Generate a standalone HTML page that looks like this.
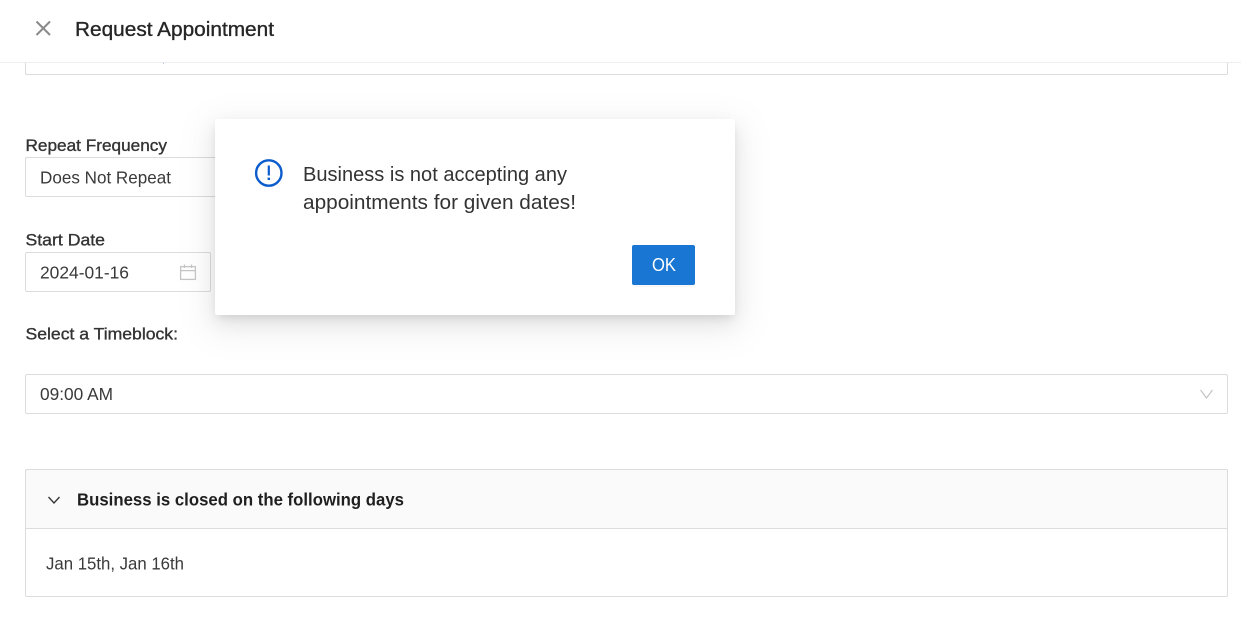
<!DOCTYPE html>
<html lang="en">
<head>
<meta charset="utf-8">
<title>Request Appointment</title>
<style>
html,body{margin:0;padding:0;background:#fff;}
body{position:relative;width:1241px;height:628px;overflow:hidden;font-family:"Liberation Sans",sans-serif;}
.box{position:absolute;box-sizing:border-box;border:1px solid #dcdcdc;border-radius:2px;background:#fff;}
.header{position:absolute;left:0;top:0;width:1241px;height:63px;background:#fff;border-bottom:1px solid #eeeeee;box-sizing:border-box;}
.panelhead{position:absolute;left:25px;top:469px;width:1203px;height:60px;box-sizing:border-box;background:#fafafa;border:1px solid #dcdcdc;border-radius:2px 2px 0 0;}
.dialog{position:absolute;left:215px;top:119px;width:520px;height:196px;background:#fff;border-radius:2px;box-shadow:0 4px 8px -2px rgba(0,0,0,.10),0 8px 20px rgba(0,0,0,.08),0 10px 36px 10px rgba(0,0,0,.05);}
.btn{position:absolute;left:632px;top:245px;width:63px;height:40px;background:#1976d2;border-radius:2px;box-shadow:0 2px 0 rgba(0,0,0,.03);}
svg.layer{position:absolute;left:0;top:0;}
text{font-family:"Liberation Sans",sans-serif;}
</style>
</head>
<body>
<div class="box" style="left:25px;top:30px;width:1203px;height:45px;"></div>
<div class="header"></div>
<div class="box" style="left:25px;top:157px;width:400px;height:40px;"></div>
<div class="box" style="left:25px;top:252px;width:186px;height:40px;"></div>
<div class="box" style="left:25px;top:374px;width:1203px;height:40px;"></div>
<div class="box" style="left:25px;top:469px;width:1203px;height:128px;"></div>
<div class="panelhead"></div>
<div class="dialog"></div>
<div class="btn"></div>
<svg class="layer" width="1241" height="628" viewBox="0 0 1241 628" xmlns="http://www.w3.org/2000/svg">
  <rect x="163" y="63" width="1" height="1" fill="#a9c6e6"/>
  <path d="M36.5 21.5L50 35M50 21.5L36.5 35" fill="none" stroke="#8a8a8a" stroke-width="2"/>
  <text x="75" y="36" font-size="20" fill="#262626" stroke="#262626" stroke-width=".35" textLength="199" lengthAdjust="spacingAndGlyphs">Request Appointment</text>

  <text x="25.5" y="151" font-size="17" fill="#333" stroke="#333" stroke-width=".35" textLength="141.5" lengthAdjust="spacingAndGlyphs">Repeat Frequency</text>
  <text x="40" y="183.5" font-size="17.5" fill="#3a3a3a" textLength="131" lengthAdjust="spacingAndGlyphs">Does Not Repeat</text>

  <text x="25.5" y="245.5" font-size="17" fill="#333" stroke="#333" stroke-width=".35" textLength="79.5" lengthAdjust="spacingAndGlyphs">Start Date</text>
  <text x="40" y="278.5" font-size="17.5" fill="#3a3a3a" textLength="89" lengthAdjust="spacingAndGlyphs">2024-01-16</text>
  <g fill="none" stroke="#c4c4c4" stroke-width="1.3">
    <rect x="180.6" y="266.6" width="14.8" height="12.8"/>
    <path d="M180.6 270.6H195.4M184.5 264.5V268M191.5 264.5V268"/>
  </g>

  <text x="25.5" y="339.5" font-size="17" fill="#333" stroke="#333" stroke-width=".35" textLength="152.5" lengthAdjust="spacingAndGlyphs">Select a Timeblock:</text>
  <text x="40" y="400" font-size="17.5" fill="#3a3a3a" textLength="73" lengthAdjust="spacingAndGlyphs">09:00 AM</text>
  <path d="M1200.5 390L1206.5 398L1212.5 390" fill="none" stroke="#c4c4c4" stroke-width="1.2"/>

  <path d="M48.5 497L54 503L59.5 497" fill="none" stroke="#333" stroke-width="1.3"/>
  <text x="77" y="505.5" font-size="17.5" font-weight="700" fill="#1f1f1f" textLength="327" lengthAdjust="spacingAndGlyphs">Business is closed on the following days</text>
  <text x="46" y="569.5" font-size="17.5" fill="#3a3a3a" textLength="138" lengthAdjust="spacingAndGlyphs">Jan 15th, Jan 16th</text>

  <circle cx="268.8" cy="173" r="12.7" fill="none" stroke="#0b5ccc" stroke-width="2.4"/>
  <path d="M268.8 165.5V175.5" stroke="#0b5ccc" stroke-width="2.2" fill="none"/>
  <rect x="267.6" y="177.6" width="2.4" height="2.4" fill="#0b5ccc"/>
  <text x="303" y="181" font-size="20" fill="#333" textLength="264" lengthAdjust="spacingAndGlyphs">Business is not accepting any</text>
  <text x="303" y="209" font-size="20" fill="#333" textLength="273" lengthAdjust="spacingAndGlyphs">appointments for given dates!</text>
  <text x="652" y="271" font-size="18" fill="#fff" textLength="24" lengthAdjust="spacingAndGlyphs">OK</text>
</svg>
</body>
</html>
